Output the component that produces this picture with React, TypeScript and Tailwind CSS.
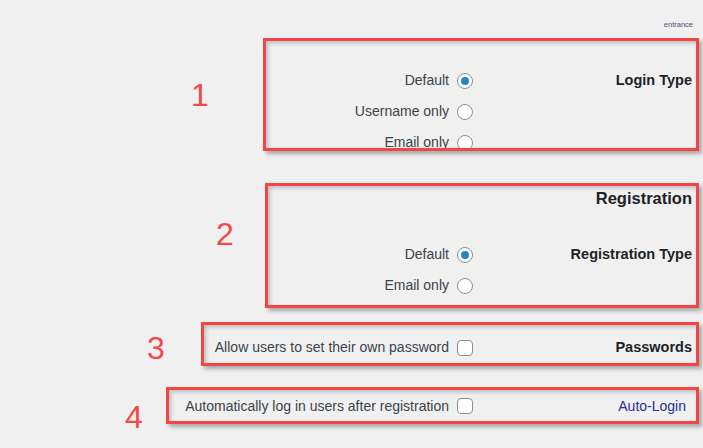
import React from "react";

const Radio = ({ checked }: { checked?: boolean }) => (
  <span className="flex h-[16px] w-[16px] shrink-0 items-center justify-center rounded-full border border-[#8c8f94] bg-white">
    {checked && <span className="h-[8px] w-[8px] rounded-full bg-[#1e88c7]" />}
  </span>
);

const Checkbox = () => (
  <span className="h-[16px] w-[16px] shrink-0 rounded-[4px] border border-[#8c8f94] bg-white" />
);

const Option = ({ label, children }: { label: string; children: React.ReactNode }) => (
  <div className="flex h-[31px] shrink-0 items-center gap-[8px] text-[14px] text-[#3c434a]">
    <span>{label}</span>
    {children}
  </div>
);

const boxClass =
  "ml-auto overflow-hidden border-[3px] border-[#f44545] shadow-[3px_3px_4px_rgba(0,0,0,0.3),inset_2px_2px_4px_rgba(0,0,0,0.22)]";

const Num = ({ n, className }: { n: string; className: string }) => (
  <span className={"text-[32px] leading-none text-[#f24848] " + className}>{n}</span>
);

export default function App() {
  return (
    <div
      className="h-[448px] w-[703px] overflow-hidden bg-[#f0f0f0]"
      style={{ fontFamily: '"Liberation Sans", Arial, sans-serif' }}
    >
      <div className="flex h-[38px] justify-end pr-[10px] pt-[21px]">
        <span className="text-[7.5px] leading-none text-[#4b4f74]">entrance</span>
      </div>

      {/* 1 - login type */}
      <div className="flex items-start pr-[4px]">
        <Num n="1" className="ml-[191px] mt-[41px]" />
        <div className={boxClass + " flex h-[113px] w-[436px]"}>
          <div className="flex flex-1 flex-col items-end pt-[24px]">
            <Option label="Default">
              <Radio checked />
            </Option>
            <Option label="Username only">
              <Radio />
            </Option>
            <Option label="Email only">
              <Radio />
            </Option>
          </div>
          <div className="w-[223px] pt-[24px]">
            <div className="flex h-[31px] items-center justify-end pr-[4px] text-[14.5px] font-bold text-[#1d2327]">
              Login Type
            </div>
          </div>
        </div>
      </div>

      {/* 2 - registration */}
      <div className="mt-[32px] flex items-start pr-[4px]">
        <Num n="2" className="ml-[216px] mt-[35px]" />
        <div className={boxClass + " flex h-[125px] w-[434px] flex-col"}>
          <div className="box-content flex h-[20px] shrink-0 items-center justify-end pr-[4px] pt-[2px] text-[16.5px] font-bold text-[#1d2327]">
            Registration
          </div>
          <div className="mt-[31px] flex shrink-0">
            <div className="flex flex-1 flex-col items-end">
              <Option label="Default">
                <Radio checked />
              </Option>
              <Option label="Email only">
                <Radio />
              </Option>
            </div>
            <div className="w-[223px]">
              <div className="flex h-[31px] items-center justify-end pr-[4px] text-[14.5px] font-bold text-[#1d2327]">
                Registration Type
              </div>
            </div>
          </div>
        </div>
      </div>

      {/* 3 - passwords */}
      <div className="mt-[14px] flex items-start pr-[4px]">
        <Num n="3" className="ml-[147px] mt-[10px]" />
        <div className={boxClass + " flex h-[44px] w-[498px] items-center pt-[7px]"}>
          <div className="flex flex-1 justify-end">
            <Option label="Allow users to set their own password">
              <Checkbox />
            </Option>
          </div>
          <div className="flex w-[223px] justify-end pr-[4px] text-[14.5px] font-bold text-[#1d2327]">
            Passwords
          </div>
        </div>
      </div>

      {/* 4 - auto login */}
      <div className="mt-[21px] flex items-start pr-[4px]">
        <Num n="4" className="ml-[125px] mt-[14px]" />
        <div className={boxClass + " flex h-[37px] w-[533px] items-center pt-[1px]"}>
          <div className="flex flex-1 justify-end">
            <Option label="Automatically log in users after registration">
              <Checkbox />
            </Option>
          </div>
          <div className="flex w-[223px] justify-end pr-[10px] text-[14px] text-[#2a2f8f]">
            Auto-Login
          </div>
        </div>
      </div>
    </div>
  );
}
